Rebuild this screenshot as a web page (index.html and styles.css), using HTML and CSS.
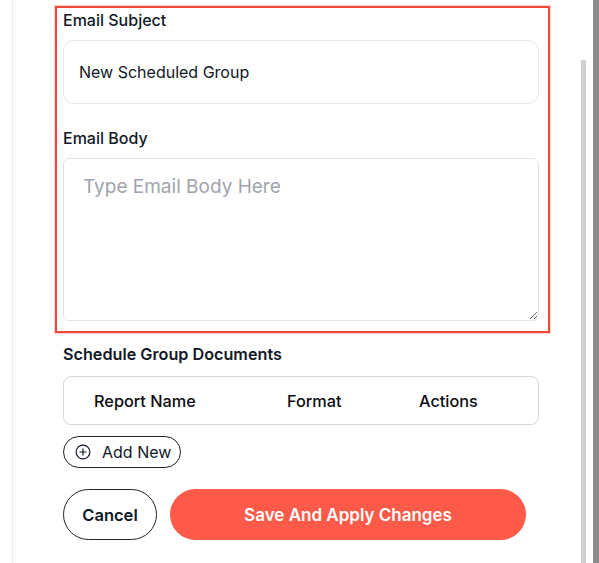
FILE: index.html
```html
<!DOCTYPE html>
<html lang="en">
<head>
<meta charset="utf-8">
<title>Schedule Group</title>
<link rel="stylesheet" href="styles.css">
</head>
<body>
<div class="page">
  <div class="gutter"></div>
  <main class="panel">
    <section class="highlight">
      <label class="label" for="subject">Email Subject</label>
      <input id="subject" class="input" type="text" value="New Scheduled Group">
      <label class="label label-gap" for="body">Email Body</label>
      <textarea id="body" class="textarea" placeholder="Type Email Body Here"></textarea>
    </section>
    <div class="rest">
      <h3 class="section-title">Schedule Group Documents</h3>
      <div class="doc-table">
        <span>Report Name</span>
        <span>Format</span>
        <span>Actions</span>
      </div>
      <button class="add-btn" type="button">
        <svg class="add-icon" width="16" height="16" viewBox="0 0 16 16" aria-hidden="true">
          <circle cx="8" cy="8" r="6.9" fill="none" stroke="#111827" stroke-width="1.2"/>
          <path d="M8 4.9v6.2M4.9 8h6.2" stroke="#111827" stroke-width="1.2" stroke-linecap="round"/>
        </svg>
        <span>Add New</span>
      </button>
      <div class="actions">
        <button class="btn-cancel" type="button">Cancel</button>
        <button class="btn-save" type="button">Save And Apply Changes</button>
      </div>
    </div>
  </main>
  <div class="scroll-thumb"></div>
  <div class="outer-bar"></div>
</div>
</body>
</html>
```

FILE: styles.css
```css
* { box-sizing: border-box; }

html, body {
  margin: 0;
  padding: 0;
  background: #ffffff;
}

body {
  font-family: Inter, "Noto Sans", "Liberation Sans", sans-serif;
  color: #111827;
  overflow: hidden;
}

.page {
  display: flex;
  height: 563px;
  width: 599px;
}

.gutter {
  width: 12px;
  flex: none;
}

.panel {
  flex: 1;
  border-left: 1px solid #ebebeb;
  padding: 6px 0 0 42px;
}

.highlight {
  width: 495px;
  border: 2px solid #f2483c;
  box-shadow: 0 0 0 1px rgba(242, 72, 60, 0.25);
  padding: 0 9px 10px 6px;
  display: flex;
  flex-direction: column;
}

.label {
  display: block;
  font-size: 16px;
  line-height: 24px;
  font-weight: 500;
  color: #111827;
  margin-bottom: 8px;
}

.label-gap {
  margin-top: 22px;
}

.input {
  width: 476px;
  height: 64px;
  border: 1px solid #e5e7eb;
  border-radius: 11px;
  padding: 0 15px;
  font-family: inherit;
  font-size: 16px;
  color: #111827;
  background: #fff;
  outline: none;
}

.textarea {
  width: 476px;
  height: 163px;
  border: 1px solid #e2e4e9;
  border-radius: 6px;
  padding: 13px 19px;
  font-family: inherit;
  font-size: 19px;
  line-height: 30px;
  color: #111827;
  background: #fff;
  outline: none;
  resize: vertical;
  display: block;
}

.textarea::placeholder {
  color: #a0a4ad;
}

.rest {
  padding-left: 8px;
}

.section-title {
  margin: 9px 0 0;
  font-size: 16.2px;
  line-height: 24px;
  font-weight: 600;
  color: #111827;
}

.doc-table {
  margin-top: 10px;
  width: 476px;
  height: 49px;
  border: 1px solid #d4d6da;
  border-radius: 8px;
  display: grid;
  grid-template-columns: 193px 132px 1fr;
  align-items: center;
  padding-left: 30px;
  font-size: 16.3px;
  font-weight: 500;
  color: #0d0d12;
}

.add-btn {
  margin-top: 11px;
  height: 32px;
  width: 118px;
  border: 1px solid #1f2330;
  border-radius: 999px;
  background: #fff;
  display: flex;
  align-items: center;
  gap: 11px;
  padding: 0 0 0 11px;
  font-family: inherit;
  font-size: 16px;
  color: #111827;
}

.add-icon {
  flex: none;
}

.actions {
  margin-top: 21px;
  display: flex;
  gap: 13px;
}

.btn-cancel {
  width: 94px;
  height: 51px;
  border: 1px solid #1f2330;
  border-radius: 999px;
  background: #fff;
  font-family: inherit;
  font-size: 16.5px;
  font-weight: 600;
  color: #111827;
}

.btn-save {
  width: 356px;
  height: 51px;
  border: none;
  border-radius: 999px;
  background: #fe5a4a;
  font-family: inherit;
  font-size: 17px;
  font-weight: 600;
  color: #ffffff;
}

.scroll-thumb {
  flex: none;
  width: 5px;
  margin-top: 60px;
  margin-right: 7px;
  background: #d0d0d0;
}

.outer-bar {
  flex: none;
  width: 6px;
  background: #8b8b8b;
}
```
